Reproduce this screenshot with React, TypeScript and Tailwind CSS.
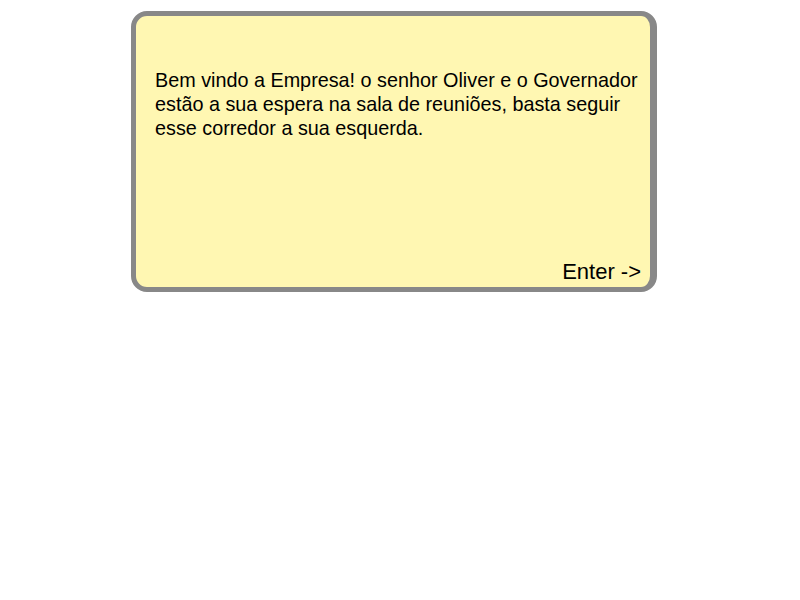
// Dialog card: welcome message with an "Enter ->" prompt in the corner

export default function App() {
  return (
    <div className="w-[800px] h-[600px] bg-white font-['Liberation_Sans',Arial,sans-serif] text-black pt-[11px] pl-[131px]">
      {/* ── Message box ─────────────────────────────── */}
      <div className="w-[526px] h-[281px] flex flex-col bg-[#fff7b2] border-[5px] border-r-[7px] border-[#888888] rounded-[16px] pt-[52px] pl-[19px] pr-[8px] pb-[4px]">
        <p className="text-[19.8px] leading-[24px]">
          Bem vindo a Empresa! o senhor Oliver e o Governador estão a sua
          espera na sala de reuniões, basta seguir esse corredor a sua
          esquerda.
        </p>

        <div className="flex-1" />

        {/* ── Continue prompt ───────────────────────── */}
        <div className="flex justify-end">
          <span className="text-[22px] leading-none whitespace-pre pr-[1px]">
            Enter -&gt;
          </span>
        </div>
      </div>
    </div>
  );
}
